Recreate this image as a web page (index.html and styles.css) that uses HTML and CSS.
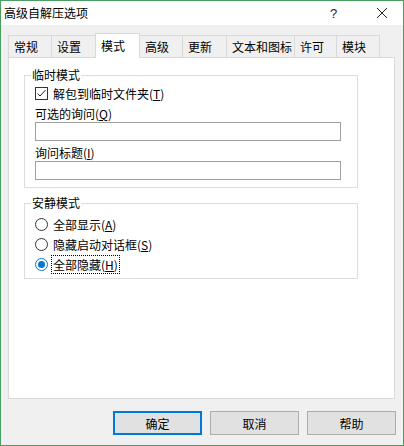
FILE: index.html
```html
<!DOCTYPE html>
<html lang="zh">
<head>
<meta charset="utf-8">
<link rel="stylesheet" href="styles.css">
</head>
<body>
<div class="window">
  <div class="titlebar">
    <span class="title">高级自解压选项</span>
    <span class="help">?</span>
    <span class="close">
      <svg width="12" height="12" viewBox="0 0 12 12"><path d="M1 1L11 11M11 1L1 11" stroke="#222" stroke-width="1" fill="none"/></svg>
    </span>
  </div>
  <div class="client">
    <div class="tabs">
      <div class="tab w43">常规</div>
      <div class="tab w44">设置</div>
      <div class="tab active w44">模式</div>
      <div class="tab w43">高级</div>
      <div class="tab w44">更新</div>
      <div class="tab w68">文本和图标</div>
      <div class="tab w42">许可</div>
      <div class="tab w43">模块</div>
    </div>
    <div class="panel">
      <fieldset class="group g1">
        <legend>临时模式</legend>
        <label class="check-row">
          <span class="checkbox">
            <svg width="11" height="11" viewBox="0 0 11 11"><path d="M1.5 5.5L4 8L9.5 2" stroke="#222" stroke-width="1" fill="none"/></svg>
          </span>
          <span>解包到临时文件夹(<u>T</u>)</span>
        </label>
        <div class="field-label">可选的询问(<u>Q</u>)</div>
        <div class="input"></div>
        <div class="field-label">询问标题(<u>I</u>)</div>
        <div class="input"></div>
      </fieldset>
      <fieldset class="group g2">
        <legend>安静模式</legend>
        <div class="radio-row"><span class="radio"></span><span>全部显示(<u>A</u>)</span></div>
        <div class="radio-row"><span class="radio"></span><span>隐藏启动对话框(<u>S</u>)</span></div>
        <div class="radio-row"><span class="radio on"></span><span class="focus">全部隐藏(<u>H</u>)</span></div>
      </fieldset>
    </div>
    <div class="buttons">
      <div class="btn default">确定</div>
      <div class="btn">取消</div>
      <div class="btn">帮助</div>
    </div>
  </div>
</div>
</body>
</html>
```

FILE: styles.css
```css
html, body {
  margin: 0;
  padding: 0;
  background: #ffffff;
}
body {
  font-family: "Noto Sans CJK SC", "Microsoft YaHei", sans-serif;
  font-size: 12px;
  color: #000;
}
.window {
  width: 404px;
  height: 446px;
  box-sizing: border-box;
  border: 1px solid #4a9e62;
  display: flex;
  flex-direction: column;
  background: #f0f0f0;
}
.titlebar {
  height: 24px;
  background: #ffffff;
  display: flex;
  align-items: center;
  padding-left: 3px;
}
.title {
  flex: 1;
  font-size: 12px;
  line-height: 24px;
}
.help {
  width: 14px;
  margin-right: 32px;
  font-family: "Liberation Sans", sans-serif;
  font-size: 13px;
  color: #222;
}
.close {
  width: 12px;
  height: 12px;
  margin-right: 15px;
  display: flex;
}
.client {
  flex: 1;
  display: flex;
  flex-direction: column;
  padding: 8px 0 0 7px;
}
.tabs {
  display: flex;
  align-items: flex-end;
  height: 24px;
  position: relative;
  z-index: 1;
}
.tab {
  height: 22px;
  box-sizing: border-box;
  border: 1px solid #d9d9d9;
  border-bottom: none;
  margin-right: -1px;
  background: #f0f0f0;
  padding-left: 5px;
  line-height: 21px;
  font-size: 12px;
}
.tab.active {
  height: 25px;
  background: #ffffff;
  margin-bottom: -1px;
  padding-top: 1px;
}
.w43 { width: 44px; }
.w44 { width: 45px; }
.w68 { width: 69px; }
.w42 { width: 43px; }
.panel {
  width: 387px;
  height: 342px;
  box-sizing: border-box;
  border: 1px solid #d9d9d9;
  background: #ffffff;
  padding: 9px 0 0 15px;
}
.group {
  margin: 0;
  width: 334px;
  box-sizing: border-box;
  border: 1px solid #dcdcdc;
  padding: 0 0 0 10px;
}
.group legend {
  padding: 0 1px;
  margin-left: -4px;
  font-size: 12px;
  line-height: 16px;
}
.g1 {
  height: 121px;
}
.g2 {
  margin-top: 7px;
  height: 84px;
  padding-top: 3px;
}
.check-row {
  display: flex;
  align-items: center;
  height: 18px;
  margin-top: 1px;
}
.checkbox {
  width: 13px;
  height: 13px;
  box-sizing: border-box;
  border: 1px solid #333;
  background: #fff;
  margin-right: 5px;
  display: flex;
  align-items: center;
  justify-content: center;
}
.field-label {
  margin-top: 3px;
  line-height: 17px;
  height: 17px;
}
.input {
  width: 306px;
  height: 19px;
  box-sizing: border-box;
  border: 1px solid #a0a0a0;
  background: #fff;
}
.radio-row {
  display: flex;
  align-items: center;
  height: 20px;
}
.radio {
  width: 13px;
  height: 13px;
  box-sizing: border-box;
  border: 1px solid #333;
  border-radius: 50%;
  margin-right: 5px;
  background: #fff;
  display: flex;
  align-items: center;
  justify-content: center;
}
.radio.on {
  border-color: #0078d7;
}
.radio.on::after {
  content: "";
  width: 7px;
  height: 7px;
  border-radius: 50%;
  background: #0078d7;
}
.focus {
  outline: 1px dotted #000;
  outline-offset: 0;
  padding: 0 1px;
  margin-left: -1px;
}
.buttons {
  display: flex;
  justify-content: flex-end;
  gap: 8px;
  padding: 12px 7px 0 0;
}
.btn {
  width: 89px;
  height: 24px;
  box-sizing: border-box;
  border: 1px solid #adadad;
  background: #e1e1e1;
  display: flex;
  align-items: center;
  justify-content: center;
  font-size: 12px;
}
.btn.default {
  border: 2px solid #0078d7;
}
```
